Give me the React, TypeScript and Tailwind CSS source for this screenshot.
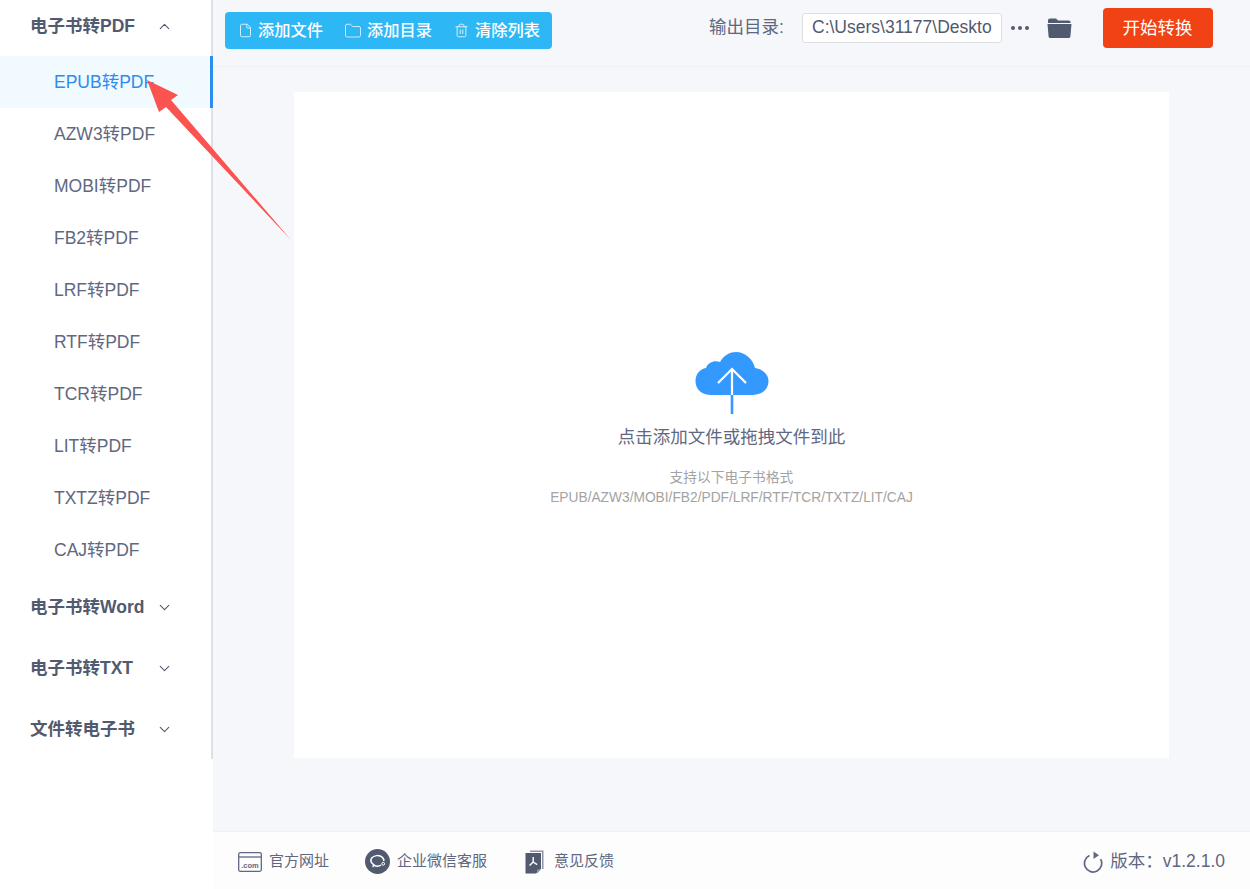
import { ChevronDown, ChevronUp, File, Folder, Trash2 } from "lucide-react";

const subItems = ["AZW3转PDF", "MOBI转PDF", "FB2转PDF", "LRF转PDF", "RTF转PDF", "TCR转PDF", "LIT转PDF", "TXTZ转PDF", "CAJ转PDF"];
const groups = ["电子书转Word", "电子书转TXT", "文件转电子书"];

function Sidebar() {
  return (
    <aside className="w-[213px] shrink-0 bg-white">
      <div className="border-r-2 border-[#dfe1e8]">
        <div className="flex h-[56px] items-center pb-[4px] pl-[30px] text-[17.5px] font-bold text-[#515a6e]">
          <span className="w-[126px]">电子书转PDF</span>
          <ChevronUp className="h-[17px] w-[17px]" strokeWidth={1.6} />
        </div>
        <div className="-mr-[2px] flex h-[52px] items-center border-r-[3px] border-[#2d8cf0] bg-[#f0faff] pl-[54px] text-[17.5px] text-[#2d8cf0]">
          EPUB转PDF
        </div>
        {subItems.map((item) => (
          <div key={item} className="flex h-[52px] items-center pl-[54px] text-[17.5px] text-[#5f6880]">
            {item}
          </div>
        ))}
        {groups.map((group) => (
          <div key={group} className="flex h-[61px] items-center pl-[30px] pt-[2px] text-[17.5px] font-bold text-[#515a6e]">
            <span className="w-[126px]">{group}</span>
            <ChevronDown className="h-[17px] w-[17px]" strokeWidth={1.6} />
          </div>
        ))}
      </div>
    </aside>
  );
}

function Toolbar() {
  return (
    <header className="flex h-[67px] shrink-0 border-b border-[#eef0f4] pt-[8px]">
      <div className="ml-[12px] mt-[4px] flex h-[37px] w-[327px] items-center rounded-[4px] bg-[#2db7f5] pl-[13px] text-[16.25px] font-medium text-white">
        <File className="h-[15px] w-[15px] opacity-90" strokeWidth={1.4} />
        <span className="ml-[5px]">添加文件</span>
        <Folder className="ml-[21px] h-[18px] w-[18px] opacity-90" strokeWidth={1.1} />
        <span className="ml-[5px]">添加目录</span>
        <Trash2 className="ml-[22px] h-[15px] w-[15px] opacity-80" strokeWidth={1.6} />
        <span className="ml-[6px]">清除列表</span>
      </div>
      <div className="ml-[157px] flex h-[40px] items-center text-[17.5px] text-[#5f6880]">
        <span className="w-[93px] pb-[2px]">输出目录:</span>
        <div className="h-[30px] w-[200px] rounded-[3px] border border-[#dcdee2] bg-white pl-[9px] pr-[9px]">
          <div className="overflow-hidden whitespace-nowrap text-[17.5px] leading-[27px] text-[#515a6e]">C:\Users\31177\Deskto</div>
        </div>
        <span className="ml-[9px] flex gap-[3.5px]">
          <i className="h-[3.5px] w-[3.5px] rounded-full bg-[#515a6e]" />
          <i className="h-[3.5px] w-[3.5px] rounded-full bg-[#515a6e]" />
          <i className="h-[3.5px] w-[3.5px] rounded-full bg-[#515a6e]" />
        </span>
        <svg className="ml-[18px]" width="25" height="22" viewBox="0 0 25 22">
          <path d="M1 3.5 Q1 1.5 3 1.5 H9 L11 3.5 H22 Q23.5 3.5 23.5 5 V6 H1 Z" fill="#515a6e" />
          <path d="M0.5 7 H24.5 L23.4 19.5 Q23.2 21 21.6 21 H3.4 Q1.8 21 1.6 19.5 Z" fill="#515a6e" />
        </svg>
        <div className="ml-[31px] flex h-[40px] w-[110px] items-center justify-center rounded-[4px] bg-[#f04214] text-[17.5px] text-white">
          开始转换
        </div>
      </div>
    </header>
  );
}

function CloudIcon() {
  return (
    <svg width="74" height="64" viewBox="0 0 74 64">
      <path
        d="M17 44 C6 44 0.5 38 0.5 30 C0.5 23 5 18 11 17 C13 11 20 9 25 11 C29 4 35 1 41 1 C50 1 58 8 60 17 C67 18 73.5 23 73.5 30 C73.5 38 67 44 58 44 Z"
        fill="#3399ff"
      />
      <path d="M37 19 V44" stroke="#ffffff" strokeWidth="2.2" fill="none" />
      <path d="M37 44 V63" stroke="#3399ff" strokeWidth="2.6" fill="none" />
      <path d="M23 32 L37 18 L51 32" stroke="#ffffff" strokeWidth="2.2" fill="none" />
    </svg>
  );
}

function DropPanel() {
  return (
    <main className="flex-1 px-[81px] pt-[25px]">
      <div className="flex h-[666px] flex-col items-center bg-white pt-[259px]">
        <CloudIcon />
        <p className="mt-[10px] text-[17.5px] leading-[24px] text-[#5f6880]">点击添加文件或拖拽文件到此</p>
        <p className="mt-[19px] text-[13.75px] leading-[20px] text-[#a3a3a3]">支持以下电子书格式</p>
        <p className="text-[13.75px] leading-[20px] text-[#a3a3a3]">EPUB/AZW3/MOBI/FB2/PDF/LRF/RTF/TCR/TXTZ/LIT/CAJ</p>
      </div>
    </main>
  );
}

function Footer() {
  return (
    <footer className="flex h-[58px] shrink-0 items-center border-t border-[#eef0f4] bg-[#fdfdfd] pl-[25px] pr-[25px] pt-[2px] text-[15px] text-[#5f6880]">
      <svg width="24" height="20" viewBox="0 0 24 20" fill="none">
        <rect x="0.7" y="0.7" width="22.6" height="18.6" rx="1.5" stroke="#5f6880" strokeWidth="1.3" />
        <path d="M1 5 H23" stroke="#5f6880" strokeWidth="1.3" />
        <text x="12" y="16" textAnchor="middle" fontSize="7.5" fontWeight="700" fill="#5f6880">.com</text>
      </svg>
      <span className="ml-[7px]">官方网址</span>
      <svg className="ml-[36px]" width="25" height="25" viewBox="0 0 25 25" fill="none">
        <circle cx="12.5" cy="12.5" r="12.5" fill="#515a6e" />
        <path d="M8 18.2 L8.6 15.6 C6 13.8 5.4 11.2 6.6 9.2 C8.4 6.2 14.6 5.6 17.4 8.4 C18.6 9.6 19 10.8 18.8 12" stroke="#ffffff" strokeWidth="1.5" />
        <path d="M8.6 15.8 C11 17.4 14 17.4 16 16" stroke="#ffffff" strokeWidth="1.5" />
        <circle cx="18.2" cy="14.8" r="1.4" stroke="#ffffff" strokeWidth="1" />
      </svg>
      <span className="ml-[7px]">企业微信客服</span>
      <svg className="ml-[38px]" width="19" height="24" viewBox="0 0 19 24">
        <path d="M5 0.5 H18.5 V19 H17 V2 H5 Z" fill="#8d94a6" />
        <path d="M0.5 3 H16 V18.5 L11 23.5 H0.5 Z" fill="#515a6e" />
        <path d="M12 23.5 L16 19.5 H12 Z" fill="#8d94a6" />
        <path d="M8.2 7 V12 M8.2 12 L4.5 15.5 M8.2 12 L12.2 14.6" stroke="#ffffff" strokeWidth="1.4" fill="none" />
      </svg>
      <span className="ml-[10px]">意见反馈</span>
      <div className="ml-auto flex items-center text-[17.5px]">
        <svg className="mr-[7px]" width="20" height="22" viewBox="0 0 20 22" fill="none">
          <path d="M6.5 4.6 A8.6 8.6 0 1 0 17.6 8.2" stroke="#5f6880" strokeWidth="1.7" />
          <path d="M10.5 0.5 L16 4.2 L10.5 8 Z" fill="#5f6880" />
        </svg>
        <span>{"版本\uFF1Av1.2.1.0"}</span>
      </div>
    </footer>
  );
}

export default function App() {
  return (
    <div
      className="relative flex h-[889px] w-[1250px] overflow-hidden bg-white"
      style={{ fontFamily: '"Liberation Sans", "Noto Sans CJK SC", sans-serif' }}
    >
      <Sidebar />
      <div className="flex min-w-0 flex-1 flex-col bg-[#f5f7fa]">
        <Toolbar />
        <DropPanel />
        <Footer />
      </div>
      {/* red annotation arrow drawn over the screenshot */}
      <svg className="absolute left-0 top-0" width="300" height="250" viewBox="0 0 300 250">
        <path d="M147 80 L178 95 L171 100 L291 240 L166 107 L159 112 Z" fill="#fb5350" />
      </svg>
    </div>
  );
}
